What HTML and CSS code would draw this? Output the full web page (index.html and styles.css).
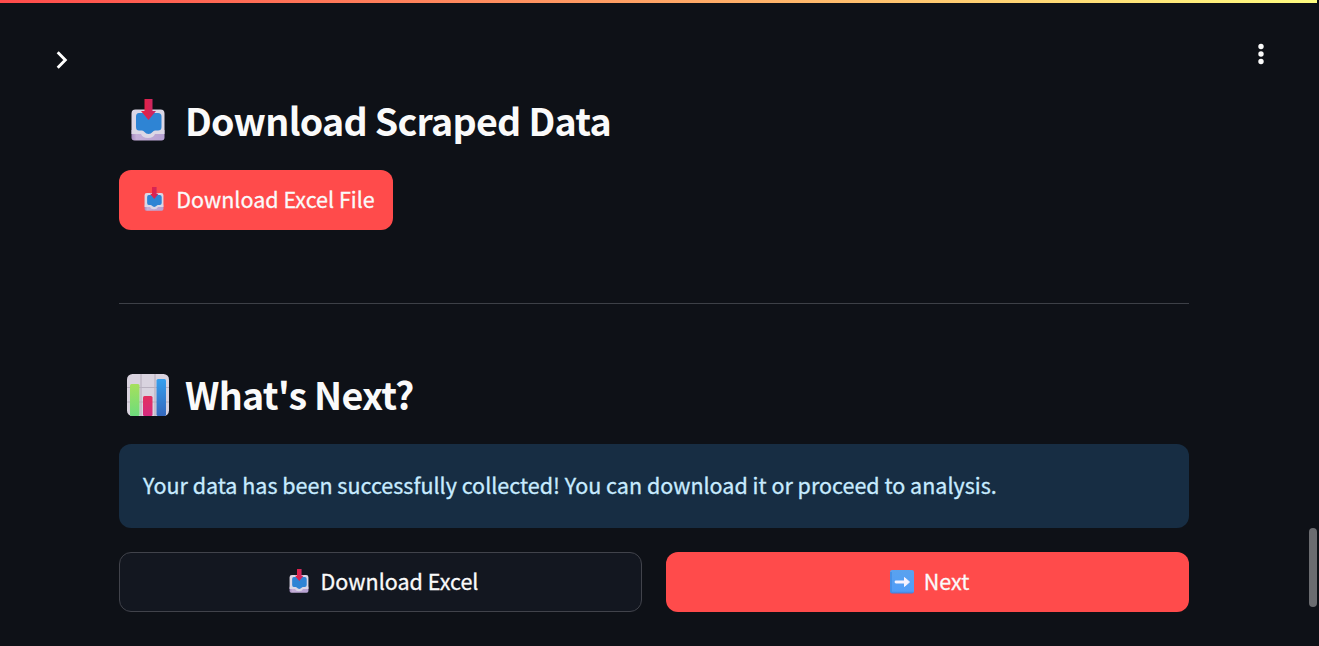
FILE: index.html
```html
<!DOCTYPE html>
<html lang="en">
<head>
<meta charset="utf-8">
<title>Download Scraped Data</title>
<link rel="stylesheet" href="styles.css">
</head>
<body>
<svg class="defs" width="0" height="0" aria-hidden="true">
  <defs>
    <linearGradient id="arrowRed" x1="0" y1="0" x2="1" y2="0"><stop offset="0" stop-color="#ef1f3c"/><stop offset="1" stop-color="#c1296b"/></linearGradient>
    <linearGradient id="trayBase" x1="0" y1="0" x2="1" y2="0"><stop offset="0" stop-color="#a78cc0"/><stop offset=".15" stop-color="#c5afd8"/><stop offset="1" stop-color="#b5a0d2"/></linearGradient>
    <linearGradient id="barGreen" x1="0" y1="0" x2="0" y2="1"><stop offset="0" stop-color="#a6e05c"/><stop offset="1" stop-color="#6ddc7c"/></linearGradient>
    <linearGradient id="barBlue" x1="0" y1="0" x2="0" y2="1"><stop offset="0" stop-color="#35a0ee"/><stop offset="1" stop-color="#3568bd"/></linearGradient>
    <linearGradient id="barPink" x1="0" y1="0" x2="0" y2="1"><stop offset="0" stop-color="#e32f5f"/><stop offset="1" stop-color="#d52a80"/></linearGradient>
    <linearGradient id="nextBlue" x1="0" y1="0" x2="0" y2="1"><stop offset="0" stop-color="#5aa2ee"/><stop offset=".9" stop-color="#519df8"/><stop offset="1" stop-color="#427cd8"/></linearGradient>
    <symbol id="inbox" viewBox="0 0 34 42">
      <path d="M.5 31H33.500V38.500Q33.500 41.500 30.500 41.500H3.500Q.5 41.500 .5 38.500Z" fill="url(#trayBase)"/>
      <path d="M4.500 10.500H29.500Q33.500 10.500 33.500 14.500V35H24Q22.500 39 17 39Q11.500 39 10 35H.5V14.500Q.5 10.500 4.500 10.500Z" fill="#dcd7e5"/>
      <path d="M8 14H27Q30.500 14 30.500 17.500V28Q30.500 31.500 27 31.500H24Q22.500 31.500 21.500 33Q20 35 17.500 35Q15 35 13.500 33Q12.500 31.500 11 31.500H8Q5 31.500 5 28V17.500Q5 14 8 14Z" fill="#2e84d4"/>
      <path d="M13.500 0H21.500V12H25L17.500 21L10 12H13.500Z" fill="url(#arrowRed)"/>
    </symbol>
  </defs>
</svg>
<div class="decoration"></div>
<header class="toolbar">
  <svg class="chevron" viewBox="0 0 12 20"><path d="M1.700 2.300L9.300 10L1.700 17.700" fill="none" stroke="#fff" stroke-width="2.900"/></svg>
  <svg class="dots" viewBox="0 0 6 22"><g fill="#fafafa"><circle cx="3" cy="3.500" r="2.700"/><circle cx="3" cy="11" r="2.700"/><circle cx="3" cy="18.500" r="2.700"/></g></svg>
</header>
<main class="content">
  <h2 class="heading"><svg class="heading-icon tray"><use href="#inbox"/></svg><span class="title">Download Scraped Data</span></h2>
  <button class="button primary file"><svg class="small-tray"><use href="#inbox"/></svg><span class="label">Download Excel File</span></button>
  <hr class="divider">
  <h2 class="heading next-heading"><svg class="heading-icon chart" viewBox="0 0 42 42">
    <rect width="42" height="42" rx="5.500" fill="#d9d3df"/>
    <path d="M14 0V42M28 0V42M0 13.500H42M0 28H42" stroke="#b9b1c0" stroke-width="1.200"/>
    <rect x="3" y="10" width="9.500" height="32" rx="1.500" fill="url(#barGreen)"/>
    <rect x="16" y="22" width="9.500" height="20" rx="1.500" fill="url(#barPink)"/>
    <rect x="29.500" y="5" width="9.500" height="37" rx="1.500" fill="url(#barBlue)"/>
  </svg><span class="title">What's Next?</span></h2>
  <div class="alert"><span class="alert-text">Your data has been successfully collected! You can download it or proceed to analysis.</span></div>
  <div class="actions">
    <button class="button secondary"><svg class="small-tray"><use href="#inbox"/></svg><span class="label">Download Excel</span></button>
    <button class="button primary next"><svg class="arrow" viewBox="0 0 24 24"><rect width="24" height="23.500" rx="2" fill="url(#nextBlue)"/><path d="M1 2V22" stroke="#448be0" stroke-width="1.500"/><path d="M6 12H15" stroke="#f5f2ff" stroke-width="2.800" stroke-linecap="round"/><path d="M14.500 7.500L19.500 12L14.500 16.500Z" fill="#f5f2ff" stroke="#f5f2ff" stroke-linejoin="round"/></svg><span class="label">Next</span></button>
  </div>
</main>
<div class="scroll-thumb"></div>
</body>
</html>
```
FILE: styles.css
```css
* { box-sizing: border-box; }
body {
  margin: 0;
  height: 646px;
  overflow: hidden;
  background: #0e1117;
  color: #fafafa;
  font-family: "Noto Sans CJK SC", "Noto Sans", sans-serif;
  font-size: 21.5px;
}
.defs { position: absolute; }
.decoration { width: 1317px; height: 3px; background: linear-gradient(90deg, #ff4b4b, #fffd80); }
.toolbar {
  display: flex;
  justify-content: space-between;
  height: 95px;
  padding: 40px 55px 0 56px;
}
.chevron { width: 12px; height: 20px; margin-top: 7px; }
.dots { width: 6px; height: 22px; }
.content { width: 1070px; margin-left: 119px; }
.heading {
  display: flex;
  align-items: center;
  height: 50px;
  margin: 0;
  padding-left: 8px;
  font-size: 37.6px;
  line-height: 50px;
  font-weight: 700;
  letter-spacing: -0.73px;
  white-space: nowrap;
}
.title { padding-bottom: 6px; }
.next-heading .title { padding-bottom: 8px; }
.heading-icon { flex: none; height: 42px; }
.tray { width: 34px; margin: 0 20px 6px 4px; }
.chart { width: 42px; margin: 0 16px 6px 0; }
.button {
  display: flex;
  align-items: center;
  justify-content: center;
  height: 60px;
  padding: 0;
  border: 0;
  border-radius: 12px;
  color: #fafafa;
  font: inherit;
  line-height: 30px;
  white-space: nowrap;
}
.label { padding-bottom: 2px; -webkit-text-stroke: 0.3px currentColor; }
.primary { background: #ff4b4b; }
.secondary { background: #131720; border: 1px solid #41434b; padding-left: 2px; }
.file { width: 274px; margin-top: 22px; padding-left: 3px; }
.next { padding-left: 4px; }
.small-tray { width: 20px; height: 24px; margin: 0 12px 2px 4px; }
.divider { height: 1px; margin: 73px 0 69px; border: 0; background: #3d4047; }
.alert {
  display: flex;
  align-items: center;
  height: 84px;
  margin-top: 21px;
  padding-left: 24px;
  border-radius: 12px;
  background: #172d43;
  color: #c7ebff;
  white-space: nowrap;
}
.alert-text { padding-bottom: 4px; -webkit-text-stroke: 0.3px currentColor; }
.actions { display: grid; grid-template-columns: 1fr 1fr; gap: 24px; margin-top: 24px; }
.arrow { width: 24px; height: 24px; margin-right: 10px; }
.scroll-thumb {
  position: absolute;
  top: 528px;
  right: 2px;
  width: 8px;
  height: 79px;
  border-radius: 4px;
  background: #6b6c70;
}
```
